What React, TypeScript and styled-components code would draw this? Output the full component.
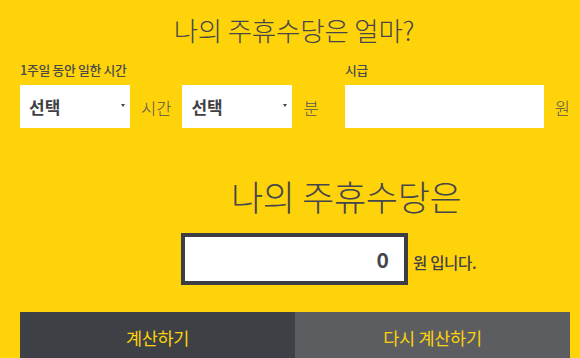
import React from "react";
import styled, { createGlobalStyle } from "styled-components";

const Global = createGlobalStyle`
  html, body { margin: 0; padding: 0; }
  body {
    background: #fed30a;
    font-family: "Noto Sans CJK KR", "Noto Sans", sans-serif;
    color: #44454a;
    overflow: hidden;
  }
`;

const Page = styled.div`
  width: 580px;
  height: 358px;
  background: #fed30a;
  padding: 0 10px 0 20px;
  box-sizing: border-box;
  display: flex;
  flex-direction: column;
`;

const Title = styled.h1`
  margin: 0;
  height: 60px;
  line-height: 60px;
  font-size: 26.5px;
  font-weight: 300;
  text-align: center;
  padding-right: 2px;
  color: #45464b;
  letter-spacing: -0.2px;
`;

const FormRow = styled.div`
  display: flex;
  align-items: flex-start;
`;

const Field = styled.div<{ $width?: number }>`
  display: flex;
  flex-direction: column;
  gap: 5px;
  ${(p) => (p.$width ? `width: ${p.$width}px; flex: none;` : "flex: 1;")}
`;

const Label = styled.div`
  height: 20px;
  line-height: 20px;
  font-size: 12.8px;
  font-weight: 500;
  color: #4a4a4a;
  letter-spacing: -0.3px;
`;

const Controls = styled.div`
  display: flex;
  align-items: center;
  height: 43px;
`;

const Select = styled.div`
  width: 110px;
  height: 43px;
  background: #fff;
  box-sizing: border-box;
  padding: 0 5px 0 9px;
  display: flex;
  align-items: center;
  justify-content: space-between;
  font-size: 17px;
  font-weight: 700;
  color: #3f4045;
`;

const Caret = styled.span`
  width: 0;
  height: 0;
  border-left: 2px solid transparent;
  border-right: 2px solid transparent;
  border-top: 3px solid #444;
  margin-top: -2px;
`;

const Unit = styled.span<{ $right?: number }>`
  font-size: 16.5px;
  font-weight: 300;
  color: #55554f;
  padding: 0 ${(p) => p.$right ?? 0}px 0 11px;
  line-height: 43px;
  margin-top: 4px;
`;

const Input = styled.div`
  flex: 1;
  height: 43px;
  background: #fff;
`;

const Heading = styled.h2`
  margin: 43px 0 0 0;
  padding-left: 211px;
  height: 50px;
  line-height: 50px;
  font-size: 35px;
  font-weight: 300;
  color: #45464b;
  letter-spacing: -0.35px;
`;

const ResultRow = styled.div`
  display: flex;
  align-items: center;
  margin-top: 12px;
  padding-left: 161px;
`;

const ResultBox = styled.div`
  width: 227px;
  height: 52px;
  box-sizing: border-box;
  border: 4px solid #3c3e43;
  background: #fff;
  display: flex;
  align-items: center;
  justify-content: flex-end;
  padding-right: 15px;
  font-size: 21px;
  font-weight: 700;
  color: #45464b;
`;

const ResultText = styled.span`
  margin-left: 5px;
  margin-top: 6px;
  font-size: 15.5px;
  font-weight: 500;
  color: #3f4045;
  letter-spacing: -0.3px;
`;

const Buttons = styled.div`
  display: flex;
  margin-top: 27px;
`;

const Button = styled.button<{ $variant: "dark" | "gray" }>`
  flex: 1;
  height: 50px;
  border: none;
  margin: 0;
  background: ${(p) => (p.$variant === "dark" ? "#3d4045" : "#5c5d61")};
  color: #fed30a;
  font-family: "Noto Sans CJK KR", "Noto Sans", sans-serif;
  font-size: 17.5px;
  font-weight: 400;
  letter-spacing: -0.3px;
  padding: 0;
  cursor: pointer;
`;

export default function App() {
  return (
    <>
      <Global />
      <Page>
        <Title>나의 주휴수당은 얼마?</Title>
        <FormRow>
          <Field $width={325}>
            <Label>1주일 동안 일한 시간</Label>
            <Controls>
              <Select>
                선택
                <Caret />
              </Select>
              <Unit $right={11}>시간</Unit>
              <Select>
                선택
                <Caret />
              </Select>
              <Unit>분</Unit>
            </Controls>
          </Field>
          <Field>
            <Label>시급</Label>
            <Controls>
              <Input />
              <Unit>원</Unit>
            </Controls>
          </Field>
        </FormRow>
        <Heading>나의 주휴수당은</Heading>
        <ResultRow>
          <ResultBox>0</ResultBox>
          <ResultText>원 입니다.</ResultText>
        </ResultRow>
        <Buttons>
          <Button $variant="dark">계산하기</Button>
          <Button $variant="gray">다시 계산하기</Button>
        </Buttons>
      </Page>
    </>
  );
}
